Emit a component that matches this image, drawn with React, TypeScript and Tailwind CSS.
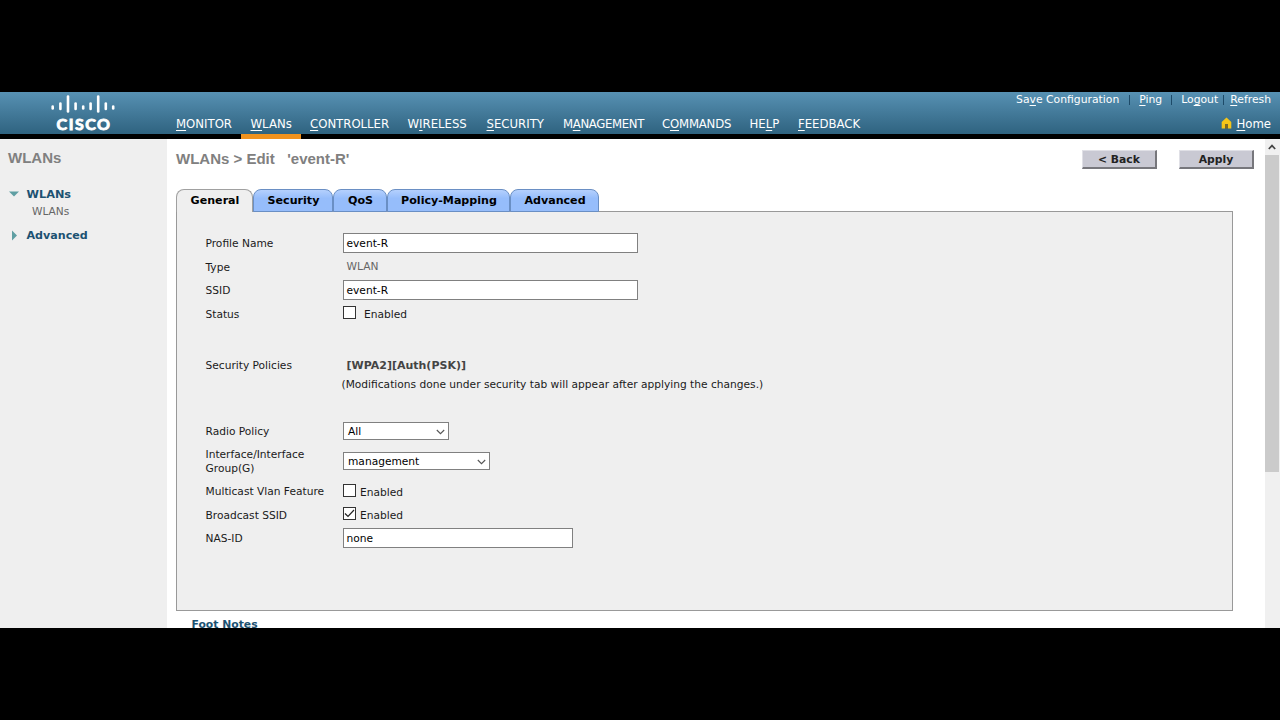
import type { ReactNode } from "react";

const verdana = "font-['DejaVu_Sans',sans-serif]";
const tahoma = "font-['DejaVu_Sans_Condensed','DejaVu_Sans',sans-serif]";

type NavItem = { pre?: string; key: string; post: string; width: string; active?: boolean };

const navItems: NavItem[] = [
  { key: "M", post: "ONITOR", width: "w-[74px] pl-[9px]" },
  { key: "W", post: "LANs", width: "w-[60px] pl-[9.5px]", active: true },
  { key: "C", post: "ONTROLLER", width: "w-[97px] pl-[9px]" },
  { pre: "W", key: "I", post: "RELESS", width: "w-[79px] pl-[9.5px]" },
  { key: "S", post: "ECURITY", width: "w-[76px] pl-[9.5px]" },
  { pre: "M", key: "A", post: "NAGEMENT", width: "w-[99px] pl-[10px] tracking-[-0.35px]" },
  { pre: "C", key: "O", post: "MMANDS", width: "w-[88px] pl-[10px] tracking-[-0.2px]" },
  { pre: "HE", key: "L", post: "P", width: "w-[48px] pl-[9.5px]" },
  { key: "F", post: "EEDBACK", width: "w-[80px] pl-[10px]" },
];

const tabs = [
  { label: "Security", width: "w-[80px]" },
  { label: "QoS", width: "w-[54px]" },
  { label: "Policy-Mapping", width: "w-[123px]" },
  { label: "Advanced", width: "w-[89px]" },
];

function Underlined({ pre = "", k, post }: { pre?: string; k: string; post: string }) {
  return (
    <>
      {pre}
      <span className="underline underline-offset-2 decoration-1">{k}</span>
      {post}
    </>
  );
}

function Logo() {
  const bars = [
    [1.7, 12.5, 14.5],
    [9.4, 9.5, 15],
    [17, 2.5, 17.5],
    [24.6, 9.5, 15],
    [32.2, 12.5, 14.5],
    [39.6, 9.5, 15],
    [47.2, 2.5, 17.5],
    [54.8, 9.5, 15],
    [62.2, 12.5, 14.5],
  ];
  return (
    <div className="flex w-[64px] flex-col items-center">
      <svg width="64" height="20" viewBox="0 0 64 20" stroke="#fff" strokeWidth="2.6" strokeLinecap="round">
        {bars.map(([x, a, b]) => (
          <line key={x} x1={x} x2={x} y1={a} y2={b} />
        ))}
      </svg>
      <span className="mt-px pl-[2px] font-['Lato',sans-serif] text-[16px] leading-[17px] font-bold tracking-[1.5px] text-white [-webkit-text-stroke:0.9px_#fff]">
        CISCO
      </span>
    </div>
  );
}

function Header() {
  return (
    <header className="flex h-[47px] shrink-0 border-b-[5px] border-black bg-linear-to-b from-[#5791b3] to-[#2f6380] text-white">
      <div className="w-[167px] shrink-0 pt-[2px] pl-[51px]">
        <Logo />
      </div>
      <nav className={`${tahoma} flex h-[47px] items-stretch text-[13px] leading-[16px]`}>
        {navItems.map((n) => (
          <div
            key={n.key + n.post}
            className={`${n.width} ${n.active ? "border-[#f0921e]" : "border-transparent"} shrink-0 border-b-[5px] pt-[24px] whitespace-nowrap`}
          >
            <Underlined pre={n.pre} k={n.key} post={n.post} />
          </div>
        ))}
      </nav>
      <div className="ml-auto flex flex-col items-end pr-[9px]">
        <div className={`${verdana} flex h-[16px] items-center text-[10.8px] leading-[16px] whitespace-nowrap`}>
          <span><Underlined pre="Sa" k="v" post="e Configuration" /></span>
          <i className="mr-[9px] ml-[10px] h-[10px] w-px bg-[#1d4a68]" />
          <span><Underlined k="P" post="ing" /></span>
          <i className="mr-[9px] ml-[9px] h-[10px] w-px bg-[#1d4a68]" />
          <span><Underlined pre="Lo" k="g" post="out" /></span>
          <i className="mr-[6px] ml-[5px] h-[10px] w-px bg-[#1d4a68]" />
          <span><Underlined k="R" post="efresh" /></span>
        </div>
        <div className={`${tahoma} mt-[8px] flex items-center gap-[4px] text-[13px] leading-[16px]`}>
          <svg width="11" height="12" viewBox="0 0 11 12" className="-mt-[3px]">
            <path d="M5.5 0.5 L10.3 5 V11.5 H7 V7 H4 V11.5 H0.7 V5 Z" fill="#f5c518" />
            <path d="M4.2 7.2 H6.8 V11.5 H4.2 Z" fill="#8a6a10" />
          </svg>
          <span><Underlined k="H" post="ome" /></span>
        </div>
      </div>
    </header>
  );
}

function Sidebar() {
  return (
    <aside className={`${verdana} w-[167px] shrink-0 bg-[#efefef] pl-[8px]`}>
      <h2 className="mt-[10px] font-['Liberation_Sans',sans-serif] text-[15px] leading-[18px] font-bold text-[#808080]">
        WLANs
      </h2>
      <div className="mt-[19px] flex h-[16px] items-center text-[11.3px] font-bold text-[#1c5272]">
        <svg width="12" height="8" className="mr-[6.5px]">
          <path d="M1 1.5 H11 L6 6.5 Z" fill="#5f9fa3" />
        </svg>
        <span className="pt-[2px]">WLANs</span>
      </div>
      <div className="mt-px h-[14px] pl-[24px] text-[10.6px] leading-[16px] text-[#666]">WLANs</div>
      <div className="mt-[10px] flex h-[16px] items-center text-[11.1px] font-bold text-[#1c5272]">
        <svg width="12" height="11" className="mr-[6.5px]">
          <path d="M4 0.5 L9 5.5 L4 10.5 Z" fill="#5f9fa3" />
        </svg>
        <span className="pt-[2px]">Advanced</span>
      </div>
    </aside>
  );
}

function Button({ children }: { children: ReactNode }) {
  return (
    <button className="h-[19px] w-[75px] border border-t-[#e0e0e6] border-r-2 border-b-2 border-l-[#e0e0e6] border-r-[#77777c] border-b-[#77777c] bg-[#c9c9d3] text-[10.8px] leading-[18px] font-bold text-[#222]">
      {children}
    </button>
  );
}

function Row({ label, height, children }: { label?: ReactNode; height: string; children?: ReactNode }) {
  return (
    <div className={`${height} flex items-center`}>
      <div className="w-[137.5px] shrink-0 pt-[2px] leading-[14px] whitespace-nowrap">{label}</div>
      {children}
    </div>
  );
}

function TextBox({ value, width }: { value: string; width: string }) {
  return (
    <div className={`${width} h-[20px] border border-[#808080] bg-white pl-[2.5px] leading-[19px] text-black`}>{value}</div>
  );
}

function SelectBox({ value, width }: { value: string; width: string }) {
  return (
    <div className={`${width} flex h-[18px] items-center justify-between border border-[#808080] bg-white pr-[3px] pl-[4px] leading-[16px] text-black`}>
      <span className="mt-[2px]">{value}</span>
      <svg width="9" height="6" fill="none" stroke="#555" strokeWidth="1.1" className="mt-[2px]">
        <path d="M0.8 1 L4.5 4.7 L8.2 1" />
      </svg>
    </div>
  );
}

function Check({ checked, gap }: { checked?: boolean; gap: string }) {
  return (
    <div className={`flex ${gap}`}>
      <div className="mt-px h-[13px] w-[13px] border border-[#333] bg-white">
        {checked && (
          <svg width="11" height="11" fill="none" stroke="#222" strokeWidth="1.2">
            <path d="M1 5.5 L4 8.5 L10 2" />
          </svg>
        )}
      </div>
      <span className="mt-[3px] leading-[14px]">Enabled</span>
    </div>
  );
}

function Scrollbar() {
  return (
    <div className="flex w-[15px] shrink-0 flex-col bg-[#f0f0f0] pr-px">
      <div className="flex h-[16px] items-center justify-center">
        <svg width="8" height="6" fill="none" stroke="#444" strokeWidth="1.7">
          <path d="M0.8 5 L4 1.6 L7.2 5" />
        </svg>
      </div>
      <div className="h-[317px] bg-[#cbcbcb]" />
    </div>
  );
}

export default function App() {
  return (
    <div className="flex h-[720px] w-[1280px] flex-col overflow-hidden bg-black py-[92px]">
      <Header />
      <div className="flex min-h-0 flex-1 overflow-hidden bg-white">
        <Sidebar />
        <main className={`${verdana} min-w-0 flex-1 overflow-hidden pl-[9px] text-[10.65px] text-[#1a1a1a]`}>
          <div className="flex h-[50px] pt-[11px] pr-[11px]">
            <h1 className="font-['Liberation_Sans',sans-serif] text-[15px] leading-[18px] font-bold whitespace-pre text-[#808080]">
              {"WLANs > Edit   'event-R'"}
            </h1>
            <div className="ml-auto flex gap-[22px]">
              <Button>&lt; Back</Button>
              <Button>Apply</Button>
            </div>
          </div>
          <div className="relative z-10 -mb-px flex h-[23px] text-[11.1px] leading-[22px] font-bold text-black">
            <div className="w-[77px] rounded-t-[8px] border border-b-0 border-[#a0a0a0] bg-[#efefef] pl-px text-center">General</div>
            {tabs.map((t) => (
              <div
                key={t.label}
                className={`${t.width} rounded-t-[8px] border border-[#6a8fc4] bg-linear-to-b from-[#b4d0fd] via-[#96bdfb] via-40% to-[#96bdfb] pl-px text-center`}
              >
                {t.label}
              </div>
            ))}
          </div>
          <section className="h-[400px] w-[1057px] border border-[#999] bg-[#efefef] pt-[19px] pl-[28.5px]">
            <Row label="Profile Name" height="h-[24px]"><TextBox value="event-R" width="w-[295px]" /></Row>
            <Row label="Type" height="h-[23px]"><span className="pt-px pl-[3.5px] text-[#666]">WLAN</span></Row>
            <Row label="SSID" height="h-[24px]"><TextBox value="event-R" width="w-[295px]" /></Row>
            <Row label="Status" height="h-[23px]"><Check gap="gap-[8px]" /></Row>
            <div className="h-[29px]" />
            <Row label="Security Policies" height="h-[22px]">
              <b className="pt-[2px] pl-[3.5px] text-[11px] text-[#444]">[WPA2][Auth(PSK)]</b>
            </Row>
            <Row height="h-[18px]">
              <span className="-ml-[1.5px]">(Modifications done under security tab will appear after applying the changes.)</span>
            </Row>
            <div className="h-[25px]" />
            <Row label="Radio Policy" height="h-[23px]"><SelectBox value="All" width="w-[106px]" /></Row>
            <div className="h-[4px]" />
            <Row label={<>Interface/Interface<br />Group(G)</>} height="h-[29px]">
              <SelectBox value="management" width="w-[147px]" />
            </Row>
            <div className="h-[4px]" />
            <Row label="Multicast Vlan Feature" height="h-[24px]"><Check gap="gap-[4px]" /></Row>
            <Row label="Broadcast SSID" height="h-[23px]"><Check checked gap="gap-[4px]" /></Row>
            <Row label="NAS-ID" height="h-[23px]"><TextBox value="none" width="w-[230px]" /></Row>
          </section>
          <h3 className="mt-[6px] pl-[15.5px] text-[10.8px] leading-[16px] font-bold text-[#1c5272]">Foot Notes</h3>
        </main>
        <Scrollbar />
      </div>
    </div>
  );
}
